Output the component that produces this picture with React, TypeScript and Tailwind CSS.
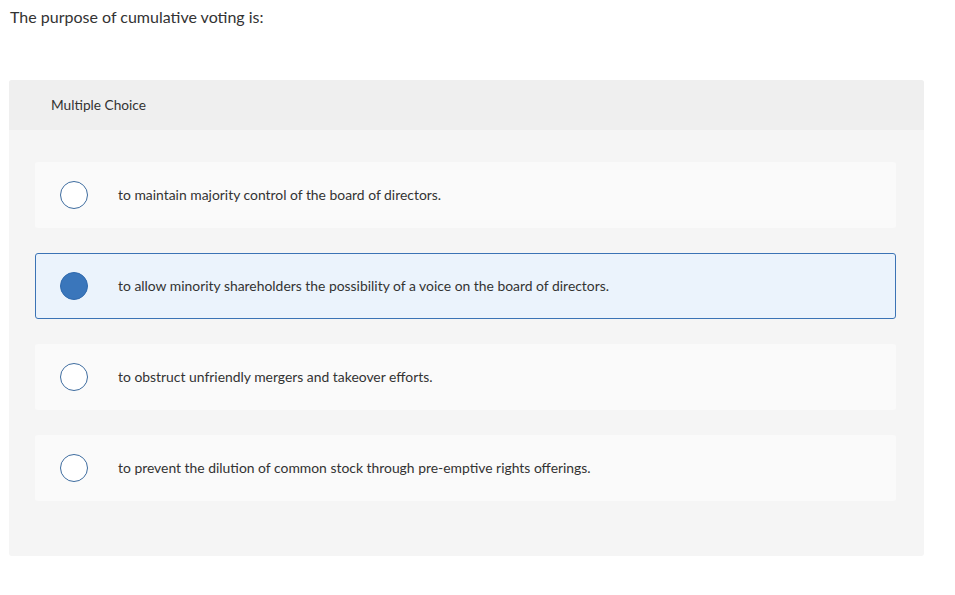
import React from "react";

const options = [
  "to maintain majority control of the board of directors.",
  "to allow minority shareholders the possibility of a voice on the board of directors.",
  "to obstruct unfriendly mergers and takeover efforts.",
  "to prevent the dilution of common stock through pre-emptive rights offerings.",
];

export default function App() {
  const selected = 1;
  return (
    <div className="min-h-[595px] w-[955px] bg-white text-[#333]" style={{ fontFamily: "Lato, 'Open Sans', Arial, sans-serif" }}>
      <div className="px-[10px] pt-[7px] text-[16px] leading-[20px] text-[#333]">The purpose of cumulative voting is:</div>
      <div className="ml-[9px] mt-[53px] w-[915px] rounded-[3px] bg-[#f5f5f5]">
        <div className="flex h-[50px] items-center rounded-t-[3px] bg-[#efefef] pl-[42px] text-[13.7px] text-[#333]">Multiple Choice</div>
        <div className="flex flex-col gap-[25px] pb-[55px] pl-[26px] pr-[28px] pt-[32px]">
          {options.map((o, i) => {
            const sel = i === selected;
            return (
              <div
                key={i}
                className={
                  sel
                    ? "flex h-[66px] items-center rounded-[3px] border border-[#3b73b5] bg-[#ebf3fc] pl-[24px]"
                    : "flex h-[66px] items-center rounded-[3px] border border-transparent bg-[#fafafa] pl-[24px]"
                }
              >
                <div
                  className={
                    sel
                      ? "h-[28px] w-[28px] shrink-0 rounded-full border-[1.5px] border-[#2f69ad] bg-[#3a76bb]"
                      : "h-[28px] w-[28px] shrink-0 rounded-full border-[1.5px] border-[#3e6c9f] bg-white"
                  }
                />
                <div className="ml-[30px] pt-[1px] text-[13.9px] text-[#333]">{o}</div>
              </div>
            );
          })}
        </div>
      </div>
    </div>
  );
}
